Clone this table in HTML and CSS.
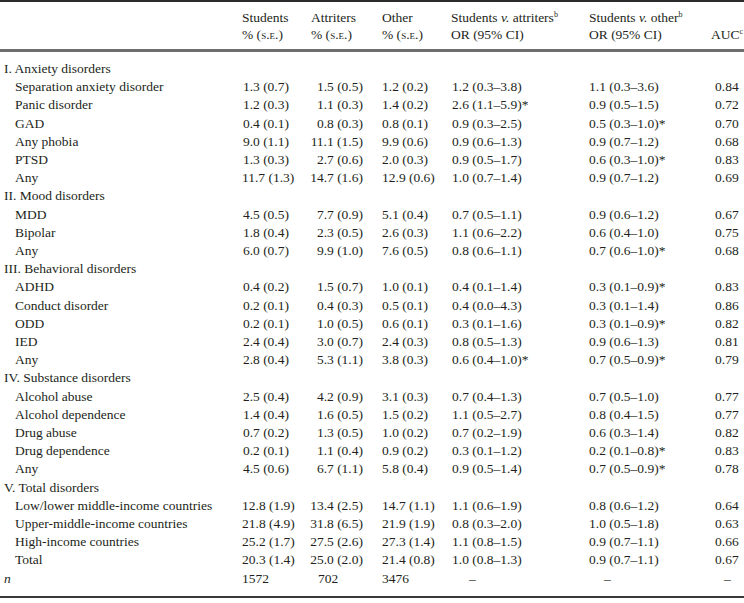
FILE: index.html
```html
<!DOCTYPE html>
<html lang="en">
<head>
    <meta charset="UTF-8">
    <title>Mental disorders by student status</title>
    <link rel="stylesheet" href="styles.css">
</head>
<body>
    <table class="data-table">
        <colgroup>
            <col class="c-label">
            <col class="c-stu">
            <col class="c-att">
            <col class="c-oth">
            <col class="c-or1">
            <col class="c-or2">
            <col class="c-auc">
        </colgroup>
        <thead>
            <tr>
                <th></th>
                <th class="h-stu">Students<br>% (<span class="sc">s.e.</span>)</th>
                <th class="h-att">Attriters<br>% (<span class="sc">s.e.</span>)</th>
                <th class="h-oth">Other<br>% (<span class="sc">s.e.</span>)</th>
                <th class="h-or1">Students <i>v.</i> attriters<sup>b</sup><br>OR (95% CI)</th>
                <th class="h-or2">Students <i>v.</i> other<sup>b</sup><br>OR (95% CI)</th>
                <th class="h-auc"><br>AUC<sup>c</sup></th>
            </tr>
        </thead>
        <tbody>
            <!-- Anxiety -->
            <tr class="section"><td colspan="7">I. Anxiety disorders</td></tr>
            <tr><td class="sub">Separation anxiety disorder</td><td class="pct stu">1.3 (0.7)</td><td class="pct att">1.5 (0.5)</td><td class="pct oth">1.2 (0.2)</td><td class="or">1.2 (0.3–3.8)</td><td class="or">1.1 (0.3–3.6)</td><td class="auc">0.84</td></tr>
            <tr><td class="sub">Panic disorder</td><td class="pct stu">1.2 (0.3)</td><td class="pct att">1.1 (0.3)</td><td class="pct oth">1.4 (0.2)</td><td class="or">2.6 (1.1–5.9)*</td><td class="or">0.9 (0.5–1.5)</td><td class="auc">0.72</td></tr>
            <tr><td class="sub">GAD</td><td class="pct stu">0.4 (0.1)</td><td class="pct att">0.8 (0.3)</td><td class="pct oth">0.8 (0.1)</td><td class="or">0.9 (0.3–2.5)</td><td class="or">0.5 (0.3–1.0)*</td><td class="auc">0.70</td></tr>
            <tr><td class="sub">Any phobia</td><td class="pct stu">9.0 (1.1)</td><td class="pct att">11.1 (1.5)</td><td class="pct oth">9.9 (0.6)</td><td class="or">0.9 (0.6–1.3)</td><td class="or">0.9 (0.7–1.2)</td><td class="auc">0.68</td></tr>
            <tr><td class="sub">PTSD</td><td class="pct stu">1.3 (0.3)</td><td class="pct att">2.7 (0.6)</td><td class="pct oth">2.0 (0.3)</td><td class="or">0.9 (0.5–1.7)</td><td class="or">0.6 (0.3–1.0)*</td><td class="auc">0.83</td></tr>
            <tr><td class="sub">Any</td><td class="pct stu">11.7 (1.3)</td><td class="pct att">14.7 (1.6)</td><td class="pct oth">12.9 (0.6)</td><td class="or">1.0 (0.7–1.4)</td><td class="or">0.9 (0.7–1.2)</td><td class="auc">0.69</td></tr>

            <!-- Mood -->
            <tr class="section"><td colspan="7">II. Mood disorders</td></tr>
            <tr><td class="sub">MDD</td><td class="pct stu">4.5 (0.5)</td><td class="pct att">7.7 (0.9)</td><td class="pct oth">5.1 (0.4)</td><td class="or">0.7 (0.5–1.1)</td><td class="or">0.9 (0.6–1.2)</td><td class="auc">0.67</td></tr>
            <tr><td class="sub">Bipolar</td><td class="pct stu">1.8 (0.4)</td><td class="pct att">2.3 (0.5)</td><td class="pct oth">2.6 (0.3)</td><td class="or">1.1 (0.6–2.2)</td><td class="or">0.6 (0.4–1.0)</td><td class="auc">0.75</td></tr>
            <tr><td class="sub">Any</td><td class="pct stu">6.0 (0.7)</td><td class="pct att">9.9 (1.0)</td><td class="pct oth">7.6 (0.5)</td><td class="or">0.8 (0.6–1.1)</td><td class="or">0.7 (0.6–1.0)*</td><td class="auc">0.68</td></tr>

            <!-- Behavioral -->
            <tr class="section"><td colspan="7">III. Behavioral disorders</td></tr>
            <tr><td class="sub">ADHD</td><td class="pct stu">0.4 (0.2)</td><td class="pct att">1.5 (0.7)</td><td class="pct oth">1.0 (0.1)</td><td class="or">0.4 (0.1–1.4)</td><td class="or">0.3 (0.1–0.9)*</td><td class="auc">0.83</td></tr>
            <tr><td class="sub">Conduct disorder</td><td class="pct stu">0.2 (0.1)</td><td class="pct att">0.4 (0.3)</td><td class="pct oth">0.5 (0.1)</td><td class="or">0.4 (0.0–4.3)</td><td class="or">0.3 (0.1–1.4)</td><td class="auc">0.86</td></tr>
            <tr><td class="sub">ODD</td><td class="pct stu">0.2 (0.1)</td><td class="pct att">1.0 (0.5)</td><td class="pct oth">0.6 (0.1)</td><td class="or">0.3 (0.1–1.6)</td><td class="or">0.3 (0.1–0.9)*</td><td class="auc">0.82</td></tr>
            <tr><td class="sub">IED</td><td class="pct stu">2.4 (0.4)</td><td class="pct att">3.0 (0.7)</td><td class="pct oth">2.4 (0.3)</td><td class="or">0.8 (0.5–1.3)</td><td class="or">0.9 (0.6–1.3)</td><td class="auc">0.81</td></tr>
            <tr><td class="sub">Any</td><td class="pct stu">2.8 (0.4)</td><td class="pct att">5.3 (1.1)</td><td class="pct oth">3.8 (0.3)</td><td class="or">0.6 (0.4–1.0)*</td><td class="or">0.7 (0.5–0.9)*</td><td class="auc">0.79</td></tr>

            <!-- Substance -->
            <tr class="section"><td colspan="7">IV. Substance disorders</td></tr>
            <tr><td class="sub">Alcohol abuse</td><td class="pct stu">2.5 (0.4)</td><td class="pct att">4.2 (0.9)</td><td class="pct oth">3.1 (0.3)</td><td class="or">0.7 (0.4–1.3)</td><td class="or">0.7 (0.5–1.0)</td><td class="auc">0.77</td></tr>
            <tr><td class="sub">Alcohol dependence</td><td class="pct stu">1.4 (0.4)</td><td class="pct att">1.6 (0.5)</td><td class="pct oth">1.5 (0.2)</td><td class="or">1.1 (0.5–2.7)</td><td class="or">0.8 (0.4–1.5)</td><td class="auc">0.77</td></tr>
            <tr><td class="sub">Drug abuse</td><td class="pct stu">0.7 (0.2)</td><td class="pct att">1.3 (0.5)</td><td class="pct oth">1.0 (0.2)</td><td class="or">0.7 (0.2–1.9)</td><td class="or">0.6 (0.3–1.4)</td><td class="auc">0.82</td></tr>
            <tr><td class="sub">Drug dependence</td><td class="pct stu">0.2 (0.1)</td><td class="pct att">1.1 (0.4)</td><td class="pct oth">0.9 (0.2)</td><td class="or">0.3 (0.1–1.2)</td><td class="or">0.2 (0.1–0.8)*</td><td class="auc">0.83</td></tr>
            <tr><td class="sub">Any</td><td class="pct stu">4.5 (0.6)</td><td class="pct att">6.7 (1.1)</td><td class="pct oth">5.8 (0.4)</td><td class="or">0.9 (0.5–1.4)</td><td class="or">0.7 (0.5–0.9)*</td><td class="auc">0.78</td></tr>

            <!-- Total -->
            <tr class="section"><td colspan="7">V. Total disorders</td></tr>
            <tr><td class="sub">Low/lower middle-income countries</td><td class="pct stu">12.8 (1.9)</td><td class="pct att">13.4 (2.5)</td><td class="pct oth">14.7 (1.1)</td><td class="or">1.1 (0.6–1.9)</td><td class="or">0.8 (0.6–1.2)</td><td class="auc">0.64</td></tr>
            <tr><td class="sub">Upper-middle-income countries</td><td class="pct stu">21.8 (4.9)</td><td class="pct att">31.8 (6.5)</td><td class="pct oth">21.9 (1.9)</td><td class="or">0.8 (0.3–2.0)</td><td class="or">1.0 (0.5–1.8)</td><td class="auc">0.63</td></tr>
            <tr><td class="sub">High-income countries</td><td class="pct stu">25.2 (1.7)</td><td class="pct att">27.5 (2.6)</td><td class="pct oth">27.3 (1.4)</td><td class="or">1.1 (0.8–1.5)</td><td class="or">0.9 (0.7–1.1)</td><td class="auc">0.66</td></tr>
            <tr><td class="sub">Total</td><td class="pct stu">20.3 (1.4)</td><td class="pct att">25.0 (2.0)</td><td class="pct oth">21.4 (0.8)</td><td class="or">1.0 (0.8–1.3)</td><td class="or">0.9 (0.7–1.1)</td><td class="auc">0.67</td></tr>

            <!-- Sample size -->
            <tr class="n-row">
                <td><i>n</i></td>
                <td class="n-stu">1572</td>
                <td class="n-att">702</td>
                <td class="n-oth">3476</td>
                <td class="n-dash1">–</td>
                <td class="n-dash2">–</td>
                <td class="n-dash3">–</td>
            </tr>
        </tbody>
    </table>
</body>
</html>
```

FILE: styles.css
```css
/* Reset */
* {
    margin: 0;
    padding: 0;
    box-sizing: border-box;
}

body {
    background-color: #ffffff;
    color: #231f20;
    font-family: "Liberation Serif", "Times New Roman", serif;
    font-size: 13.5px;
    width: 744px;
}

/* Table */
.data-table {
    width: 744px;
    border-collapse: collapse;
    table-layout: fixed;
    border-top: 2px solid #2b2b2b;
    border-bottom: 2px solid #3a3a3a;
}

.c-label { width: 242px; }
.c-stu { width: 68px; }
.c-att { width: 72px; }
.c-oth { width: 69px; }
.c-or1 { width: 137px; }
.c-or2 { width: 122px; }
.c-auc { width: 34px; }

/* Header */
.data-table thead th {
    font-weight: normal;
    text-align: left;
    vertical-align: top;
    line-height: 17px;
    padding: 7px 0 6px 0;
    white-space: nowrap;
    border-bottom: 3px solid #6e6e6e;
}

.h-att { padding-left: 1px !important; }
.h-or2 { padding-left: 1px !important; }
.h-auc { padding-left: 1px !important; }

.sc {
    font-variant: small-caps;
}

sup {
    font-size: 8px;
    line-height: 0;
    vertical-align: 5px;
}

/* Body rows */
.data-table tbody td {
    line-height: 18.2px;
    white-space: nowrap;
    vertical-align: middle;
}

.data-table tbody tr:first-child td {
    padding-top: 8px;
}

.section td {
    padding-left: 4px;
}

.sub {
    padding-left: 15px;
}

.pct {
    text-align: right;
}

.stu { padding-right: 21px; }
.att { padding-right: 19px; }
.oth { padding-right: 27px; }

.or {
    padding-left: 1px;
}

.auc {
    padding-left: 5px;
}

/* n row */
.n-row td {
    padding-bottom: 8px;
}

.n-row td:first-child {
    padding-left: 4px;
}

.n-att { padding-left: 8px; }
.n-dash1 { padding-left: 18px; }
.n-dash2 { padding-left: 16px; }
.n-dash3 { padding-left: 14px; }
```
